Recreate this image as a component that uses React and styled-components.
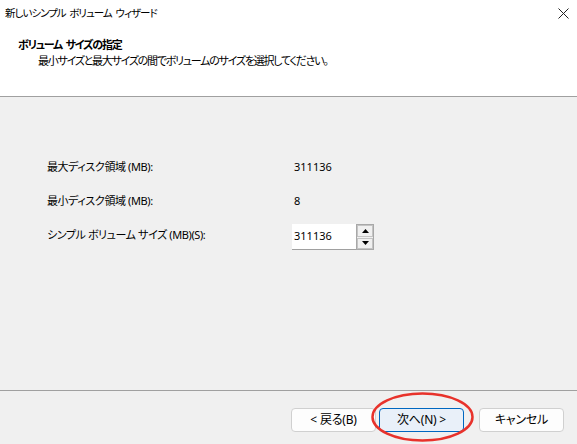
import React from "react";
import styled, { createGlobalStyle } from "styled-components";

const Global = createGlobalStyle`
  html, body { margin: 0; padding: 0; background: #ffffff; }
  body {
    font-family: "Noto Sans", "Noto Sans CJK JP", sans-serif;
    font-size: 11px;
    color: #000;
    font-feature-settings: "palt";
  }
  * { box-sizing: border-box; }
`;

const Window = styled.div`
  width: 577px;
  height: 444px;
  display: flex;
  flex-direction: column;
  background: #f0f0f0;
  overflow: hidden;
`;

const Header = styled.div`
  height: 97px;
  background: #ffffff;
  border-bottom: 1px solid #a0a0a0;
  display: flex;
  flex-direction: column;
`;

const TitleBar = styled.div`
  height: 27px;
  display: flex;
  align-items: center;
  justify-content: space-between;
  padding-left: 5px;
  line-height: 1;
  font-size: 10.5px;
  letter-spacing: -1px;
  word-spacing: 2px;
`;

const CloseButton = styled.div`
  width: 28px;
  height: 27px;
  display: flex;
  align-items: center;
  justify-content: center;
`;

const PageTitle = styled.div`
  margin-top: ${(p) => (p.$bold ? 10 : 0)}px;
  padding-left: ${(p) => p.$indent}px;
  line-height: 16px;
  font-weight: ${(p) => (p.$bold ? 700 : 400)};
  letter-spacing: -1.25px;
  word-spacing: 2px;
`;

const Body = styled.div`
  flex: 1;
  padding: 57px 0 0 47px;
`;

const Form = styled.div`
  display: grid;
  grid-template-columns: 245px auto;
  grid-auto-rows: 26px;
  row-gap: 8px;
  align-items: center;
`;

const Label = styled.div`
  line-height: 16px;
  letter-spacing: -0.4px;
`;

const Value = styled.div`
  padding-left: 2px;
  line-height: 16px;
`;

const Spin = styled.div`
  display: flex;
  align-items: stretch;
  height: 26px;
  margin-top: 4px;
`;

const SpinField = styled.div`
  width: 64px;
  background: #ffffff;
  border-bottom: 1px solid #a0a0a0;
  display: flex;
  align-items: center;
  padding: 0 0 2px 2px;
`;

const SpinButtons = styled.div`
  width: 18px;
  border: 1px solid #a8a8a8;
  background: #f0f0f0;
  display: flex;
  flex-direction: column;
  gap: 1px;
`;

const SpinArrow = styled.div`
  flex: 1;
  background: #f0f0f0;
  border: 1px solid #c4c4c4;
  display: flex;
  align-items: center;
  justify-content: center;
`;

const Footer = styled.div`
  height: 54px;
  border-top: 1px solid #a0a0a0;
  display: flex;
  justify-content: flex-end;
  align-items: flex-start;
  padding: 17px 13px 0 0;
`;

const Button = styled.div`
  width: 85px;
  height: 24px;
  margin-left: ${(p) => p.$gap}px;
  border-radius: 4px;
  border: 1px solid ${(p) => (p.$default ? "#0067c0" : "#d0d0d0")};
  background: ${(p) => (p.$default ? "#e9f0f9" : "#fdfdfd")};
  display: flex;
  align-items: center;
  justify-content: center;
  line-height: 1;
  font-size: 12px;
  letter-spacing: -0.2px;
`;

const Highlight = styled.div`
  position: relative;
  margin-left: 3px;
`;

const Ellipse = styled.svg`
  position: absolute;
  left: -8px;
  top: -16px;
  width: 103px;
  height: 50px;
  pointer-events: none;
  overflow: visible;
`;

export default function App() {
  return (
    <>
      <Global />
      <Window>
        <Header>
          <TitleBar>
            <span>新しいシンプル ボリューム ウィザード</span>
            <CloseButton>
              <svg width="11" height="11" viewBox="0 0 11 11">
                <path d="M0.5 0.5 L10.5 10.5 M10.5 0.5 L0.5 10.5" stroke="#222" strokeWidth="1" fill="none" />
              </svg>
            </CloseButton>
          </TitleBar>
          <PageTitle $indent={18} $bold>ボリューム サイズの指定</PageTitle>
          <PageTitle $indent={38}>
            最小サイズと最大サイズの間でボリュームのサイズを選択してください。
          </PageTitle>
        </Header>
        <Body>
          <Form>
            <Label>最大ディスク領域 (MB):</Label>
            <Value>311136</Value>
            <Label>最小ディスク領域 (MB):</Label>
            <Value>8</Value>
            <Label>シンプル ボリューム サイズ (MB)(S):</Label>
            <Spin>
              <SpinField>311136</SpinField>
              <SpinButtons>
                <SpinArrow>
                  <svg width="7" height="4" viewBox="0 0 7 4"><path d="M3.5 0 L7 4 L0 4 Z" fill="#000" /></svg>
                </SpinArrow>
                <SpinArrow>
                  <svg width="7" height="4" viewBox="0 0 7 4"><path d="M0 0 L7 0 L3.5 4 Z" fill="#000" /></svg>
                </SpinArrow>
              </SpinButtons>
            </Spin>
          </Form>
        </Body>
        <Footer>
          <Button $gap={0}>&lt; 戻る(B)</Button>
          <Highlight>
            <Button $gap={0} $default>次へ(N) &gt;</Button>
            <Ellipse viewBox="0 0 103 50">
              <ellipse cx="51.5" cy="25" rx="50" ry="23.5" fill="none" stroke="#e8322b" strokeWidth="2.5" />
            </Ellipse>
          </Highlight>
          <Button $gap={15}>キャンセル</Button>
        </Footer>
      </Window>
    </>
  );
}
